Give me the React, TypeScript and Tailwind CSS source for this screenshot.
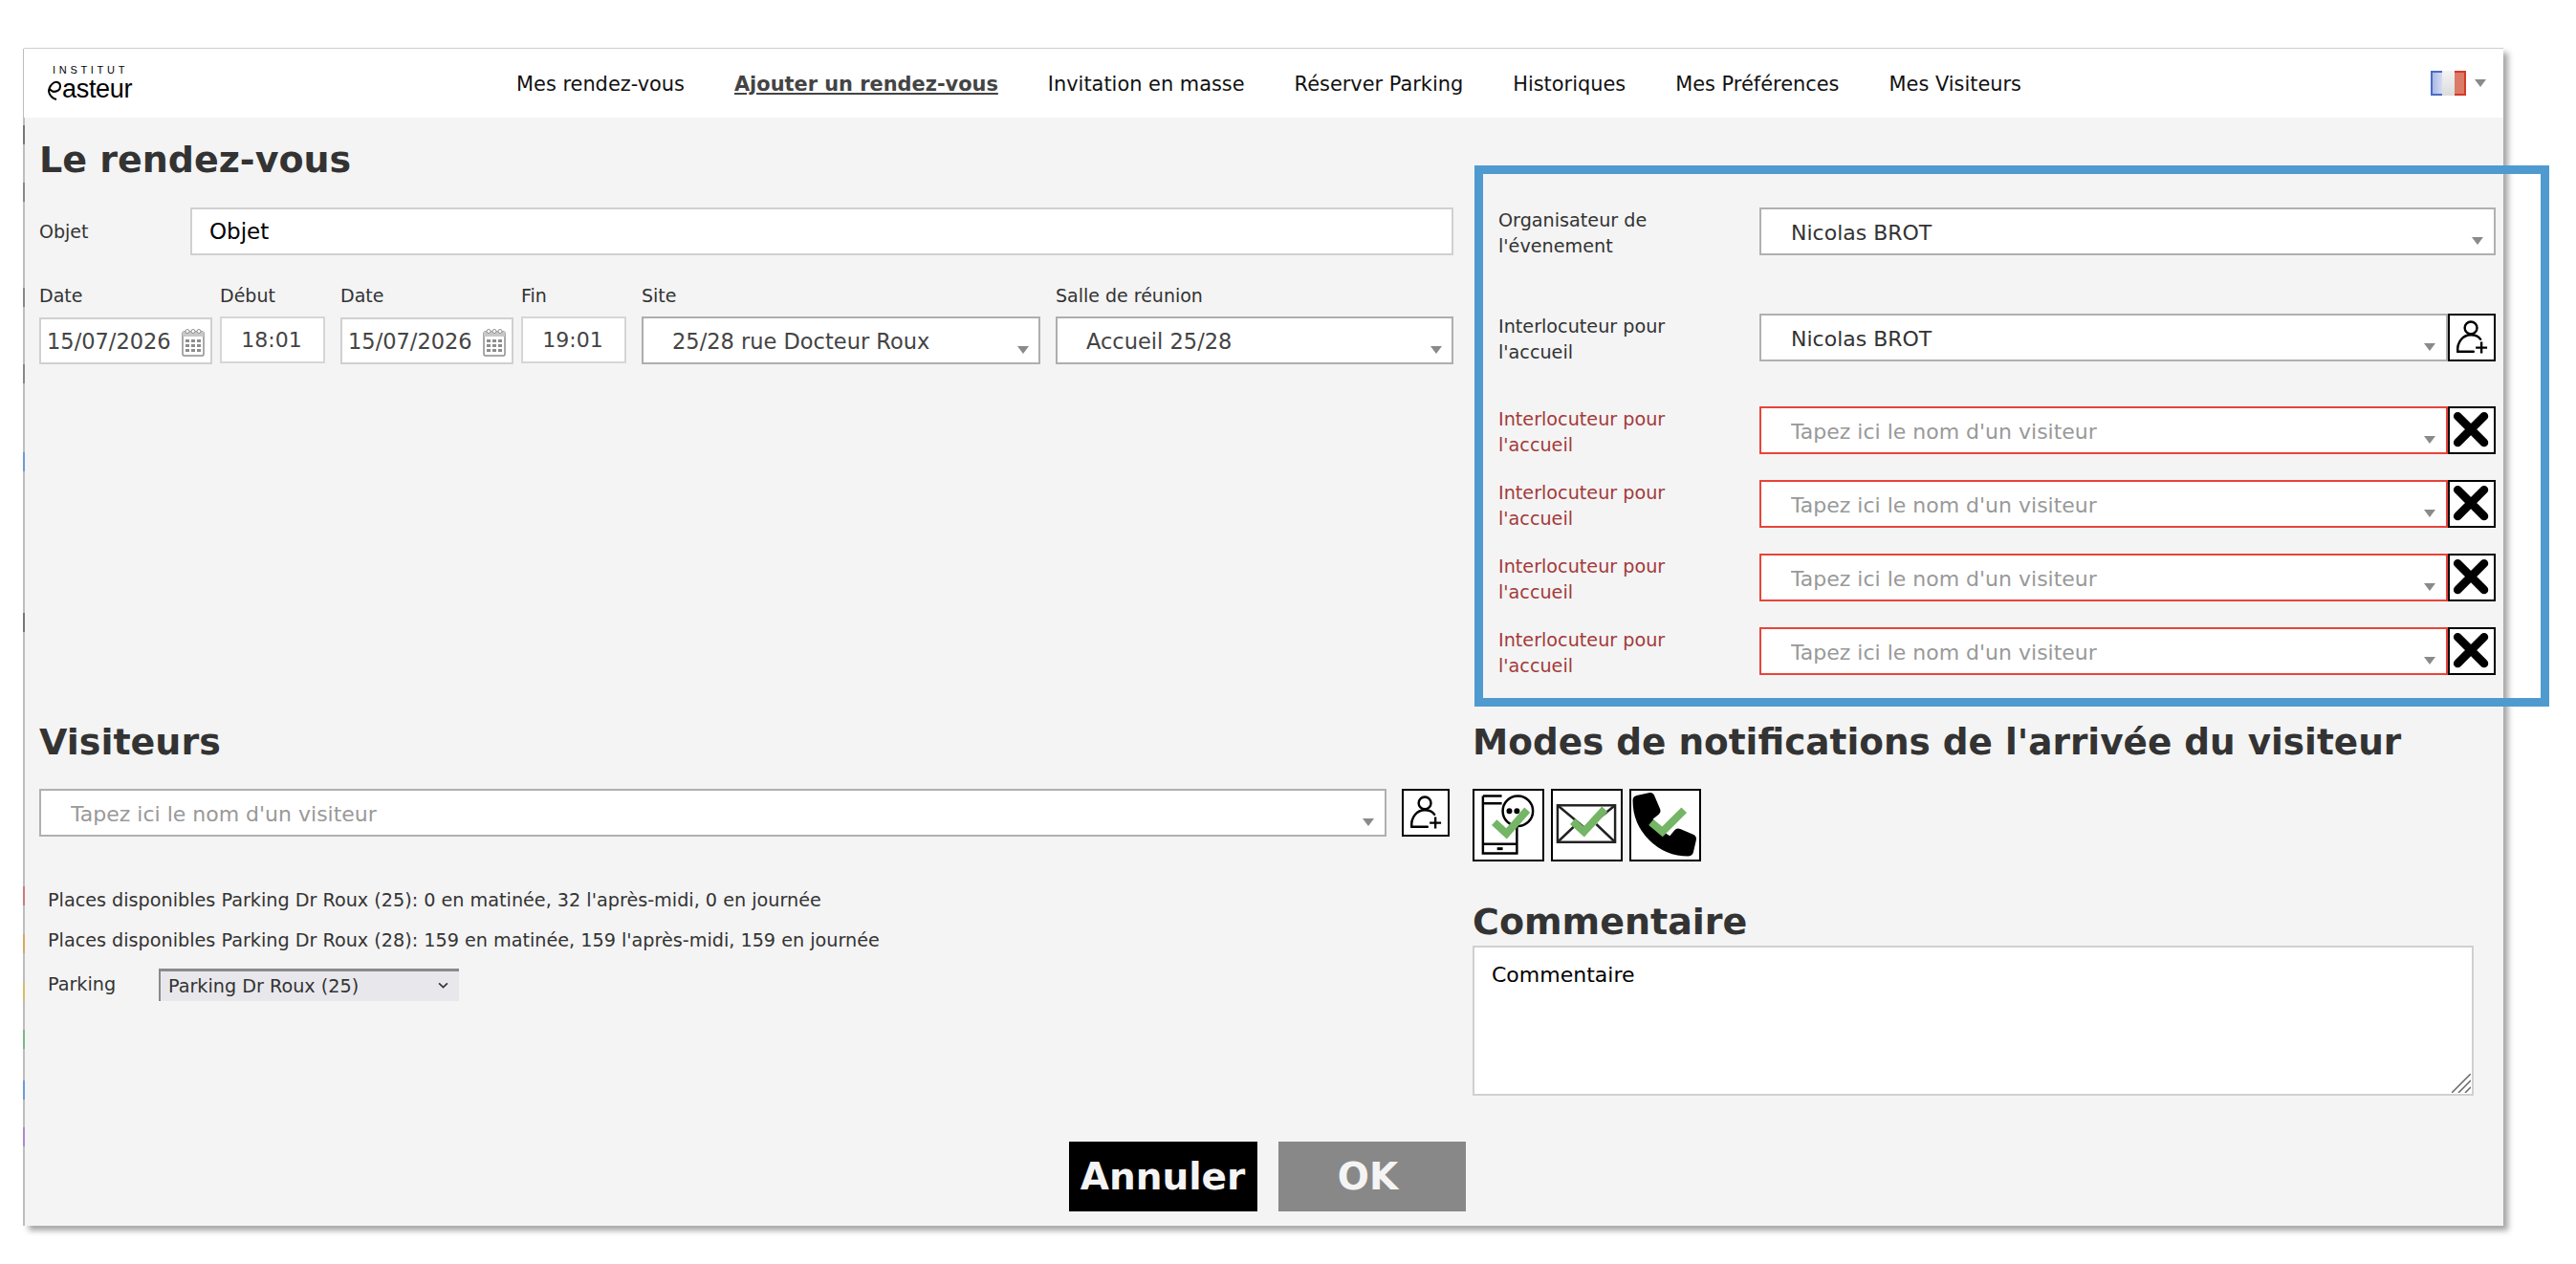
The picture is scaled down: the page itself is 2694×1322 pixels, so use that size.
const navItems = [
  "Mes rendez-vous",
  "Ajouter un rendez-vous",
  "Invitation en masse",
  "Réserver Parking",
  "Historiques",
  "Mes Préférences",
  "Mes Visiteurs",
];

const edgeMarks = [
  "top-[926px] bg-[#c97c7c]",
  "top-[976px] bg-[#d3a868]",
  "top-[1026px] bg-[#d2bc70]",
  "top-[1076px] bg-[#7db68a]",
  "top-[1129px] bg-[#6f9bd4]",
  "top-[1178px] bg-[#a88cc8]",
  "top-[472px] bg-[#6f9bd4]",
  "top-[640px] bg-[#777777]",
  "top-[130px] bg-[#777777]",
  "top-[190px] bg-[#888888]",
  "top-[300px] bg-[#888888]",
  "top-[380px] bg-[#888888]",
];

function Caret({ className }: { className: string }) {
  return (
    <svg viewBox="0 0 12 8" className={`absolute h-[8px] w-[12px] fill-[#8a8a8a] ${className}`}>
      <path d="M0 0h12L6 8z" />
    </svg>
  );
}

function Combo({
  value,
  placeholder,
  error,
  dark,
}: {
  value?: string;
  placeholder?: string;
  error?: boolean;
  dark?: boolean;
}) {
  return (
    <div className="relative h-[50px] min-w-0 flex-1">
      <input
        readOnly
        defaultValue={value}
        placeholder={placeholder}
        className={`block h-full w-full border-2 bg-white pt-[3px] pr-8 pl-[31px] text-[22px] text-[#333] outline-none placeholder:text-[#999] ${
          error ? "border-[#e8443a]" : dark ? "border-[#b0b0b0]" : "border-[#bdbdbd]"
        }`}
      />
      <Caret className="right-[13px] bottom-[11px]" />
    </div>
  );
}

function AddPersonButton() {
  return (
    <button className="h-[50px] w-[50px] shrink-0 border-2 border-black bg-white">
      <svg viewBox="0 0 50 50" className="h-full w-full fill-none stroke-black stroke-[2.6]">
        <circle cx="24" cy="14" r="7" />
        <path d="M27 41H9C8 30 15 22 24 22c5 0 9 2 11 5" strokeLinecap="round" />
        <path d="M36 30v13M29.500 36.500h13" />
      </svg>
    </button>
  );
}

function RemoveButton() {
  return (
    <button className="h-[50px] w-[50px] shrink-0 border-2 border-black bg-white">
      <svg viewBox="0 0 50 50" className="h-full w-full fill-none stroke-black stroke-[9.500]">
        <path d="M9 9l30 30M39 9L9 39" strokeLinecap="round" />
      </svg>
    </button>
  );
}

function CalendarIcon() {
  return (
    <svg viewBox="0 0 24 30" className="absolute top-[9px] right-[6px] h-[30px] w-[24px] fill-[#8d8d8d]">
      <rect x="1" y="4" width="22" height="25" rx="1.500" fill="#fff" stroke="#8d8d8d" strokeWidth="1.500" />
      <rect x="1" y="4" width="22" height="5" fill="#c8c8c8" />
      <circle cx="6" cy="3.500" r="2" fill="#fff" stroke="#8d8d8d" />
      <circle cx="12" cy="3.500" r="2" fill="#fff" stroke="#8d8d8d" />
      <circle cx="18" cy="3.500" r="2" fill="#fff" stroke="#8d8d8d" />
      <rect x="4" y="12" width="4" height="3" />
      <rect x="10" y="12" width="4" height="3" />
      <rect x="16" y="12" width="4" height="3" />
      <rect x="4" y="17" width="4" height="3" />
      <rect x="10" y="17" width="4" height="3" />
      <rect x="16" y="17" width="4" height="3" />
      <rect x="4" y="22" width="4" height="3" />
      <rect x="10" y="22" width="4" height="3" />
      <rect x="16" y="22" width="4" height="3" />
    </svg>
  );
}

function DateField({ value }: { value: string }) {
  return (
    <div className="flex w-[181px] flex-col">
      <label className="h-[35px] text-[19px] leading-[24px] text-[#333]">Date</label>
      <div className="relative h-[49px] overflow-hidden border-2 border-[#d0d0d0] bg-white pl-[6px] text-[22.500px] leading-[46px] text-[#444]">
        {value}
        <CalendarIcon />
      </div>
    </div>
  );
}

function TimeField({ label, value }: { label: string; value: string }) {
  return (
    <div className="flex w-[110px] flex-col">
      <label className="h-[34px] text-[19px] leading-[24px] text-[#333]">{label}</label>
      <div className="flex h-[49px] items-center justify-center border-2 border-[#d6d6d6] bg-white pr-[2px] text-[22px] text-[#444]">
        {value}
      </div>
    </div>
  );
}

function SelectField({ label, value, width }: { label: string; value: string; width: string }) {
  return (
    <div className={`flex flex-col ${width}`}>
      <label className="h-[34px] text-[19px] leading-[24px] text-[#333]">{label}</label>
      <div className="relative h-[50px] border-2 border-[#aeaeae] bg-white pl-[30px] text-[22.500px] leading-[49px] text-[#444]">
        {value}
        <Caret className="right-[10px] bottom-[9px]" />
      </div>
    </div>
  );
}

function ContactRow({ error, children }: { error?: boolean; children: React.ReactNode }) {
  return (
    <div className="flex h-[50px] items-center">
      <label className={`w-[273px] pt-[3px] text-[19.200px] leading-[27px] ${error ? "text-[#a33a3a]" : "text-[#333]"}`}>
        Interlocuteur pour
        <br />
        l'accueil
      </label>
      {children}
    </div>
  );
}

function Check({ d }: { d: string }) {
  return <path d={d} fill="none" stroke="#74b566" strokeWidth="8" />;
}

function NotificationIcons() {
  return (
    <div className="mt-[8px] flex gap-[7px]">
      <div className="h-[76px] w-[75px] border-2 border-black bg-white">
        <svg viewBox="0 0 72 72" className="h-full w-full fill-none stroke-black stroke-[2.500]">
          <path d="M9 5h20M9 5v61h36V38" />
          <path d="M9 13h20M9 56h36" />
          <path d="M24 61h6" strokeWidth="3" />
          <circle cx="46" cy="21" r="16" fill="#fff" />
          <circle cx="37" cy="21" r="1.800" fill="#000" />
          <circle cx="45" cy="21" r="1.800" fill="#000" />
          <Check d="M21 33l13 12 22-25" />
        </svg>
      </div>
      <div className="h-[76px] w-[75px] border-2 border-black bg-white">
        <svg viewBox="0 0 72 72" className="h-full w-full fill-none stroke-[#222] stroke-[2.500]">
          <rect x="5" y="15" width="61" height="39" />
          <path d="M5 15l30 25 31-25M5 54l20-19M66 54L46 35" />
          <Check d="M21 32l12 11 22-24" />
        </svg>
      </div>
      <div className="h-[76px] w-[75px] border-2 border-black bg-white">
        <svg viewBox="0 0 72 72" className="h-full w-full">
          <g transform="translate(4 4) scale(0.122)">
            <path
              d="M497.39 361.8l-112-48a24 24 0 0 0-28 6.9l-49.6 60.6A370.66 370.660 0 0 1 130.6 204.110l60.6-49.6a23.94 23.94 0 0 0 6.9-28l-48-112A24.160 24.160 0 0 0 122.6.61l-104 24A24 24 0 0 0 0 48c0 256.500 207.900 464 464 464a24 24 0 0 0 23.4-18.6l24-104a24.290 24.290 0 0 0-14.010-27.600z"
              fill="#000"
              stroke="#000"
              strokeWidth="40"
              strokeLinejoin="round"
            />
          </g>
          <Check d="M21 33l12 10 23-23" />
        </svg>
      </div>
    </div>
  );
}

function Logo() {
  return (
    <div className="relative ml-[24px] h-[40px] w-[92px] shrink-0 text-black">
      <div className="pl-[6px] text-[11px] leading-[12px] tracking-[3.700px] font-['Liberation_Sans',sans-serif]">INSTITUT</div>
      <div className="flex items-center">
        <svg viewBox="0 0 16 24" className="mt-[3px] h-[24px] w-[16px] fill-none stroke-black stroke-2">
          <path d="M2 14C2 8 7 3 11 4c4 1 4 7 0 9-3 1.500-6 1-8-2M2 14c1 4 4 7 8 8" />
        </svg>
        <span className="text-[27px] leading-[24px] tracking-[-0.300px] font-['Liberation_Sans',sans-serif]">asteur</span>
      </div>
    </div>
  );
}

function FlagMenu() {
  return (
    <div className="relative flex items-center gap-[9px]">
      <div className="flex h-[26px] w-[37px]">
        <div className="w-[12px] border-2 border-r-0 border-[#4c6cc4] bg-gradient-to-r from-[#a9b9e6] to-[#d5dcf2]" />
        <div className="flex-1 bg-gradient-to-b from-[#f4f4f4] to-[#dcdcdc]" />
        <div className="w-[12px] border-2 border-l-0 border-[#d23a26] bg-[#dc7a68]" />
      </div>
      <svg viewBox="0 0 12 8" className="h-[8px] w-[12px] fill-[#8a8a8a]">
        <path d="M0 0h12L6 8z" />
      </svg>
    </div>
  );
}

export default function App() {
  return (
    <div className="relative h-[1322px] w-[2694px] overflow-hidden bg-white pt-[50px] pl-[25px] font-['DejaVu_Sans',Verdana,sans-serif]">
      <div className="relative flex h-[1232px] w-[2593px] flex-col border-t border-[#cfcfcf] bg-[#f4f4f4] shadow-[5px_5px_6px_#a6a6a6]">
        <div className="absolute top-0 -left-px h-full w-[2px] bg-[#bdbdbd]">
          {edgeMarks.map((mark) => (
            <div key={mark} className={`absolute left-0 h-[20px] w-[2px] -translate-y-[50px] ${mark}`} />
          ))}
        </div>

        <header className="relative flex h-[72px] shrink-0 items-center bg-white pr-[18px]">
          <Logo />
          <nav className="ml-[399px] flex flex-1 items-center gap-[52px] pt-[3px] text-[20.900px] text-[#111]">
            {navItems.map((item) => (
              <a
                key={item}
                className={item === "Ajouter un rendez-vous" ? "font-bold text-[#444] underline" : ""}
              >
                {item}
              </a>
            ))}
          </nav>
          <FlagMenu />
        </header>

        <main className="grid flex-1 grid-cols-[1495px_1fr] grid-rows-[627px_1fr] pl-[16px]">
          <section>
            <h1 className="pt-[21px] text-[38px] leading-[46px] font-bold text-[#333]">Le rendez-vous</h1>
            <div className="mt-[27px] flex h-[50px] w-[1479px] items-center">
              <label className="w-[158px] text-[19px] text-[#333]">Objet</label>
              <input
                readOnly
                defaultValue="Objet"
                className="h-full flex-1 border-2 border-[#d0d0d0] bg-white pl-[18px] text-[23px] text-black outline-none"
              />
            </div>
            <div className="mt-[30px] flex w-[1479px] items-start gap-[16px]">
              <div className="flex gap-[8px]">
                <DateField value="15/07/2026" />
                <TimeField label="Début" value="18:01" />
              </div>
              <div className="flex gap-[8px]">
                <DateField value="15/07/2026" />
                <TimeField label="Fin" value="19:01" />
              </div>
              <SelectField label="Site" value="25/28 rue Docteur Roux" width="w-[417px]" />
              <SelectField label="Salle de réunion" value="Accueil 25/28" width="flex-1" />
            </div>
          </section>

          <section className="pt-[94px] pl-[31px]">
            <div className="w-[1043px]">
              <div className="flex h-[50px] items-center">
                <label className="w-[273px] pt-[3px] text-[19.200px] leading-[27px] text-[#333]">
                  Organisateur de
                  <br />
                  l'évenement
                </label>
                <Combo value="Nicolas BROT" dark />
              </div>
              <div className="mt-[61px]">
                <ContactRow>
                  <Combo value="Nicolas BROT" dark />
                  <AddPersonButton />
                </ContactRow>
              </div>
              <div className="mt-[47px] flex flex-col gap-[27px]">
                {[0, 1, 2, 3].map((row) => (
                  <ContactRow key={row} error>
                    <Combo placeholder="Tapez ici le nom d'un visiteur" error />
                    <RemoveButton />
                  </ContactRow>
                ))}
              </div>
            </div>
          </section>

          <section>
            <h2 className="pt-[3px] text-[38px] leading-[46px] font-bold text-[#333]">Visiteurs</h2>
            <div className="mt-[26px] flex w-[1475px] items-center gap-[16px]">
              <div className="flex w-[1409px]">
                <Combo placeholder="Tapez ici le nom d'un visiteur" dark />
              </div>
              <AddPersonButton />
            </div>
            <div className="mt-[55px] pl-[9px] text-[19.200px] leading-[24px] text-[#333]">
              <p>Places disponibles Parking Dr Roux (25): 0 en matinée, 32 l'après-midi, 0 en journée</p>
              <p className="mt-[18px]">Places disponibles Parking Dr Roux (28): 159 en matinée, 159 l'après-midi, 159 en journée</p>
              <div className="mt-[17px] flex items-center">
                <label className="w-[116px]">Parking</label>
                <div className="relative h-[34px] w-[314px] border-t-[3px] border-l-2 border-t-[#8a8a8a] border-l-[#8a8a8a] bg-[#e8e8ec] pl-[8px] text-[19.200px] leading-[31px] text-[#333]">
                  Parking Dr Roux (25)
                  <svg viewBox="0 0 10 6" className="absolute top-[11px] right-[11px] h-[7px] w-[11px] fill-none stroke-[#333] stroke-[1.500]">
                    <path d="M1 1l4 4 4-4" />
                  </svg>
                </div>
              </div>
            </div>
          </section>

          <section className="pl-[4px]">
            <h2 className="pt-[3px] text-[37.400px] leading-[46px] font-bold text-[#333]">Modes de notifications de l'arrivée du visiteur</h2>
            <div className="mt-[26px]">
              <NotificationIcons />
            </div>
            <h2 className="mt-[40px] text-[38px] leading-[46px] font-bold text-[#333]">Commentaire</h2>
            <div className="relative mt-[2px] h-[157px] w-[1047px]">
              <textarea
                readOnly
                defaultValue="Commentaire"
                className="block h-full w-full resize-none border-2 border-[#d0d0d0] bg-white px-[18px] py-[12px] text-[22px] text-black outline-none"
              />
              <svg viewBox="0 0 20 20" className="absolute right-[3px] bottom-[3px] h-[20px] w-[20px] stroke-[#666] stroke-[1.500]">
                <path d="M0 20L20 0M7 20L20 7M14 20l6-6" />
              </svg>
            </div>
          </section>
        </main>

        <footer className="flex h-[88px] shrink-0 justify-center gap-[22px] pl-[7px]">
          <button className="h-[73px] w-[197px] bg-black text-[39px] leading-none font-bold text-[#f4f4f4]">Annuler</button>
          <button className="h-[73px] w-[196px] bg-[#888888] pr-[8px] text-[39px] leading-none font-bold text-[#f4f4f4]">OK</button>
        </footer>
      </div>

      <div className="pointer-events-none absolute top-[173px] left-[1542px] h-[566px] w-[1124px] border-[9px] border-[#4f9bd0]" />
    </div>
  );
}
